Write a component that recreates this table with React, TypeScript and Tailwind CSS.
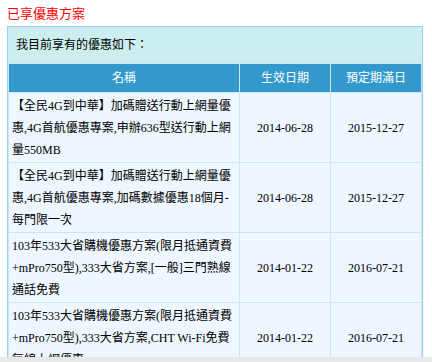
const font = '[font-family:"Liberation_Serif","Noto_Sans_CJK_TC",serif]';

type Plan = {
  name: string;
  start: string;
  end: string;
};

const plans: Plan[] = [
  {
    name: '【全民4G到中華】加碼贈送行動上網量優惠,4G首航優惠專案,申辦636型送行動上網量550MB',
    start: '2014-06-28',
    end: '2015-12-27',
  },
  {
    name: '【全民4G到中華】加碼贈送行動上網量優惠,4G首航優惠專案,加碼數據優惠18個月-每門限一次',
    start: '2014-06-28',
    end: '2015-12-27',
  },
  {
    name: '103年533大省購機優惠方案(限月抵通資費+mPro750型),333大省方案,[一般]三門熟線通話免費',
    start: '2014-01-22',
    end: '2016-07-21',
  },
  {
    name: '103年533大省購機優惠方案(限月抵通資費+mPro750型),333大省方案,CHT Wi-Fi免費無線上網優惠',
    start: '2014-01-22',
    end: '2016-07-21',
  },
];

export default function App() {
  return (
    <div className={`min-h-screen bg-white text-[12px] text-black ${font}`}>
      <div className="h-[26px] pl-[7px] pt-[5px] text-[13px] leading-[18px] text-[#ff0000]">已享優惠方案</div>

      <div className="ml-[7px] w-[416px] border border-[#99ccff] bg-[#cceeee]">
        <div className="px-[8px] py-[8px] leading-[20px]">我目前享有的優惠如下：</div>

        <table className="w-[414px] table-fixed border-separate border-spacing-[1px] bg-[#cde4f6]">
          <colgroup>
            <col className="w-[230px]" />
            <col className="w-[90px]" />
            <col className="w-[90px]" />
          </colgroup>
          <thead>
            <tr className="h-[28px] bg-[#3399cc] text-white">
              <th className="p-0 font-normal">名稱</th>
              <th className="p-0 font-normal">生效日期</th>
              <th className="p-0 font-normal">預定期滿日</th>
            </tr>
          </thead>
          <tbody>
            {plans.map((plan, index) => (
              <tr key={index} className="h-[69px] bg-[#eef6ff]">
                <td className="px-[3px] py-[1px] align-middle leading-[22px]">{plan.name}</td>
                <td className="p-0 text-center align-middle">{plan.start}</td>
                <td className="p-0 text-center align-middle">{plan.end}</td>
              </tr>
            ))}
          </tbody>
        </table>
      </div>

      <div className="fixed inset-x-0 bottom-0 h-[5px] bg-[#e8e8e8]" />
    </div>
  );
}
